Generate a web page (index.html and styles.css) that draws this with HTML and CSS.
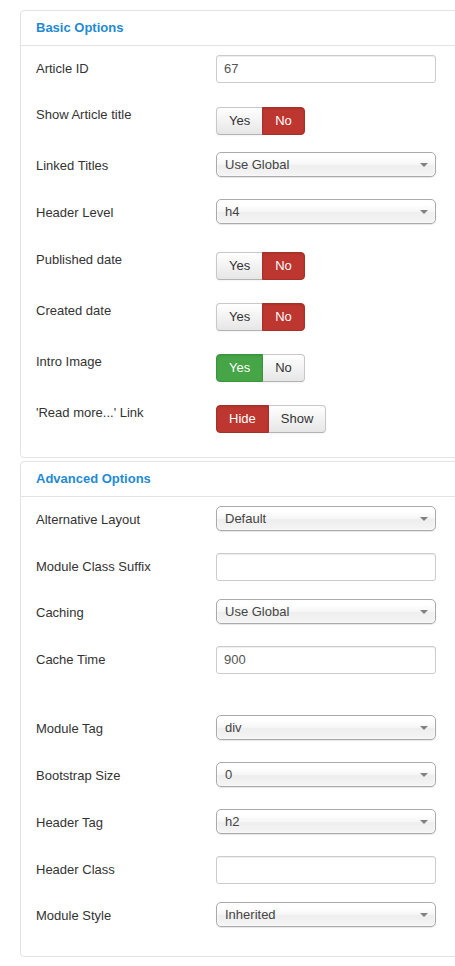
FILE: index.html
```html
<!DOCTYPE html>
<html>
<head>
<meta charset="utf-8">
<link rel="stylesheet" href="styles.css">
</head>
<body>
<div class="panel">
  <div class="panel-head">Basic Options</div>
  <div class="panel-body">
    <div class="row row-input"><div class="label">Article ID</div><div class="control"><div class="input">67</div></div></div>
    <div class="row row-toggle"><div class="label">Show Article title</div><div class="control"><div class="btn-group"><span class="btn">Yes</span><span class="btn red">No</span></div></div></div>
    <div class="row row-select"><div class="label">Linked Titles</div><div class="control"><div class="select">Use Global<i class="arrow"></i></div></div></div>
    <div class="row row-select"><div class="label">Header Level</div><div class="control"><div class="select">h4<i class="arrow"></i></div></div></div>
    <div class="row row-toggle"><div class="label">Published date</div><div class="control"><div class="btn-group"><span class="btn">Yes</span><span class="btn red">No</span></div></div></div>
    <div class="row row-toggle"><div class="label">Created date</div><div class="control"><div class="btn-group"><span class="btn">Yes</span><span class="btn red">No</span></div></div></div>
    <div class="row row-toggle"><div class="label">Intro Image</div><div class="control"><div class="btn-group"><span class="btn green">Yes</span><span class="btn">No</span></div></div></div>
    <div class="row row-toggle"><div class="label">'Read more...' Link</div><div class="control"><div class="btn-group"><span class="btn red">Hide</span><span class="btn">Show</span></div></div></div>
  </div>
</div>
<div class="panel panel-2">
  <div class="panel-head">Advanced Options</div>
  <div class="panel-body">
    <div class="row row-select"><div class="label">Alternative Layout</div><div class="control"><div class="select">Default<i class="arrow"></i></div></div></div>
    <div class="row row-input"><div class="label">Module Class Suffix</div><div class="control"><div class="input"></div></div></div>
    <div class="row row-select"><div class="label">Caching</div><div class="control"><div class="select">Use Global<i class="arrow"></i></div></div></div>
    <div class="row row-input"><div class="label">Cache Time</div><div class="control"><div class="input">900</div></div></div>
    <div class="spacer"></div>
    <div class="row row-select"><div class="label">Module Tag</div><div class="control"><div class="select">div<i class="arrow"></i></div></div></div>
    <div class="row row-select"><div class="label">Bootstrap Size</div><div class="control"><div class="select">0<i class="arrow"></i></div></div></div>
    <div class="row row-select"><div class="label">Header Tag</div><div class="control"><div class="select">h2<i class="arrow"></i></div></div></div>
    <div class="row row-input"><div class="label">Header Class</div><div class="control"><div class="input"></div></div></div>
    <div class="row row-select"><div class="label">Module Style</div><div class="control"><div class="select">Inherited<i class="arrow"></i></div></div></div>
  </div>
</div>
</body>
</html>
```
FILE: styles.css
```css
html, body {
  margin: 0;
  padding: 0;
  background: #fff;
  overflow: hidden;
}
body {
  padding-top: 10px;
  font-family: "Liberation Sans", Arial, sans-serif;
  font-size: 13px;
  color: #333;
}
.panel {
  margin-left: 20px;
  width: 445px;
  border: 1px solid #e3e3e3;
  border-radius: 4px;
  box-sizing: border-box;
}
.panel-2 {
  margin-top: 3px;
}
.panel-head {
  height: 34px;
  line-height: 34px;
  padding-left: 15px;
  font-weight: bold;
  font-size: 13px;
  color: #1f8ad4;
  border-bottom: 1px solid #e3e3e3;
}
.panel-body {
  padding: 9px 0 7px 15px;
}
.row {
  display: flex;
  align-items: flex-start;
}
.label {
  width: 180px;
  flex: none;
  padding-top: 5px;
  line-height: 18px;
  color: #333;
}
.row-input { height: 28px; margin-bottom: 18px; }
.row-select { height: 25px; margin-bottom: 22px; }
.row-toggle { height: 34px; margin-bottom: 17px; }
.row-toggle .control { padding-top: 6px; }
.spacer { height: 23px; }
.input {
  width: 220px;
  height: 28px;
  box-sizing: border-box;
  border: 1px solid #ccc;
  border-radius: 3px;
  box-shadow: inset 0 1px 1px rgba(0,0,0,0.075);
  padding: 0 7px;
  line-height: 26px;
  color: #555;
  background: #fff;
}
.select {
  position: relative;
  width: 220px;
  height: 25px;
  box-sizing: border-box;
  border: 1px solid #aaa;
  border-radius: 5px;
  background: linear-gradient(#ffffff 20%, #f6f6f6 50%, #eeeeee 52%, #f4f4f4 100%);
  box-shadow: inset 0 0 3px #fff, 0 1px 1px rgba(0,0,0,0.1);
  padding: 0 8px;
  line-height: 23px;
  color: #444;
}
.arrow {
  position: absolute;
  right: 7px;
  top: 10px;
  width: 0;
  height: 0;
  border-left: 4px solid transparent;
  border-right: 4px solid transparent;
  border-top: 4px solid #808080;
}
.btn-group {
  display: flex;
}
.btn {
  display: block;
  height: 28px;
  box-sizing: border-box;
  padding: 0 12px;
  line-height: 26px;
  font-size: 13px;
  color: #333;
  border: 1px solid #c8c8c8;
  border-bottom-color: #b3b3b3;
  background: linear-gradient(#ffffff, #e6e6e6);
  box-shadow: inset 0 1px 0 rgba(255,255,255,0.2), 0 1px 2px rgba(0,0,0,0.05);
}
.btn:first-child {
  border-radius: 4px 0 0 4px;
}
.btn + .btn {
  margin-left: -1px;
  border-radius: 0 4px 4px 0;
}
.btn.red {
  background: #bd362f;
  border-color: #a5312b;
  color: #fff;
  box-shadow: inset 0 1px 2px rgba(0,0,0,0.1);
  position: relative;
}
.btn.green {
  background: #46a546;
  border-color: #3e923e;
  color: #fff;
  box-shadow: inset 0 1px 2px rgba(0,0,0,0.1);
  position: relative;
}
```
